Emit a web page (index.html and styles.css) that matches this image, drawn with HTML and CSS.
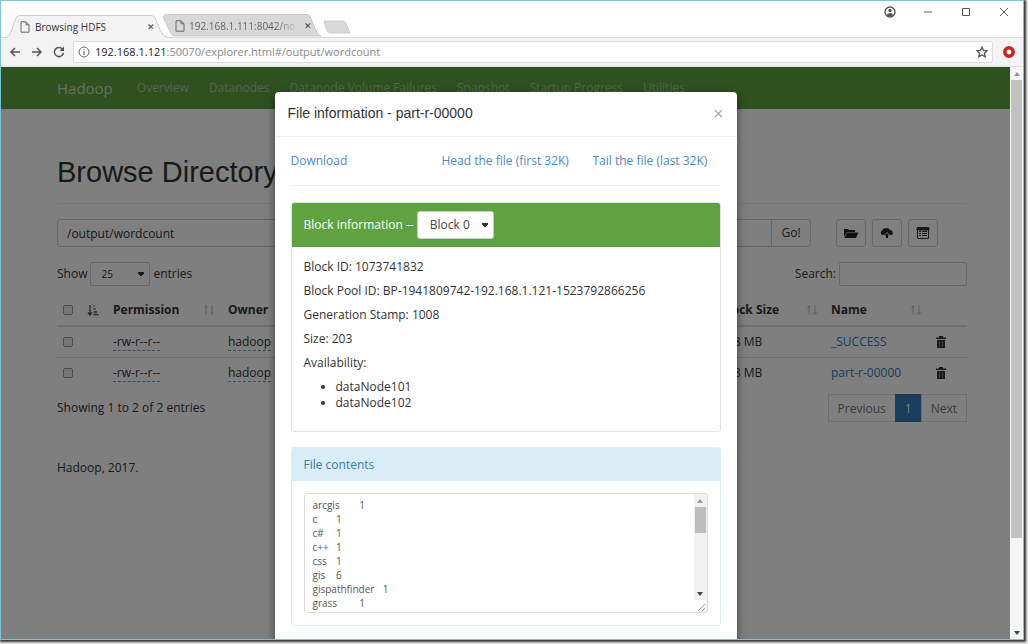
FILE: index.html
```html
<!DOCTYPE html>
<html lang="en">
<head>
<meta charset="utf-8">
<title>Browsing HDFS</title>
<link rel="stylesheet" href="styles.css">
</head>
<body>
<svg class="defs" aria-hidden="true">
  <symbol id="doc" viewBox="0 0 10 12"><path d="M1 .8h5l3 3v7.4H1zM6 .8v3h3" fill="none" stroke="currentColor"/></symbol>
  <symbol id="sort" viewBox="0 0 12 12"><path d="M3 11V2M1.500 3.500L3 1.500l1.500 2M9 1v9M7.500 8.500L9 10.500l1.500-2" fill="none" stroke="currentColor"/></symbol>
  <symbol id="trash" viewBox="0 0 12 14"><path d="M1 2.500h3V1h4v1.500h3V4H1zM2 5h8v8H2z" fill="currentColor"/><path d="M4.500 6v6M7.500 6v6" stroke="#999" stroke-width=".8"/></symbol>
</svg>
<div class="window">
  <header class="tabstrip">
    <div class="tabs">
      <div class="tab active"><svg class="tab-bg" viewBox="0 0 164 23" preserveAspectRatio="none"><path d="M0 23C6 22 6 19 8 14L12 3Q13 .5 16 .5H147Q150 .5 151 3L156 15Q159 22 164 23" fill="#f4f3f4" stroke="#cfc8ce"/></svg>
        <svg class="doc"><use href="#doc"/></svg><span>Browsing HDFS</span><button class="tab-x" aria-label="Close tab">✕</button></div>
      <div class="tab"><svg class="tab-bg" viewBox="0 0 164 23" preserveAspectRatio="none"><path d="M0 3Q1 .5 4 .5H147Q150 .5 151 3L156 15Q159 22 162 22H12Q9 22 7 17Z" fill="#d8d8d8" stroke="#c8c4c8"/></svg>
        <svg class="doc"><use href="#doc"/></svg><span class="fade">192.168.1.111:8042/no</span><button class="tab-x" aria-label="Close tab">✕</button></div>
      <button class="newtab" aria-label="New tab"><svg viewBox="0 0 28 14"><path d="M1 1H20Q22 1 23 3L27 13H8Q5 13 4 11Z" fill="#d9d9d9" stroke="#cecece"/></svg></button>
    </div>
    <div class="controls">
      <button aria-label="Account"><svg viewBox="0 0 12 12"><circle cx="6" cy="6" r="5" fill="none" stroke="#555" stroke-width="1.400"/><circle cx="6" cy="4.500" r="1.700" fill="#555"/><path d="M2.500 9Q6 5 9.500 9Q6 12 2.500 9" fill="#555"/></svg></button>
      <button aria-label="Minimize"><svg viewBox="0 0 12 12"><path d="M2 6h8" stroke="#666"/></svg></button>
      <button aria-label="Maximize"><svg viewBox="0 0 12 12"><path d="M2.500 2.500h7v7h-7z" fill="none" stroke="#555"/></svg></button>
      <button aria-label="Close"><svg viewBox="0 0 12 12"><path d="M2 2l8 8M10 2l-8 8" stroke="#555"/></svg></button>
    </div>
  </header>
  <div class="toolbar">
    <button aria-label="Back"><svg viewBox="0 0 12 12"><path d="M11 6H2M6 2L2 6l4 4" fill="none" stroke="#555" stroke-width="1.500"/></svg></button>
    <button aria-label="Forward"><svg viewBox="0 0 12 12"><path d="M1 6h9M6 2l4 4-4 4" fill="none" stroke="#555" stroke-width="1.500"/></svg></button>
    <button aria-label="Reload"><svg viewBox="0 0 12 12"><path d="M9.500 3A4.600 4.600 0 1 0 10.500 7" fill="none" stroke="#555" stroke-width="1.500"/><path d="M11 .5V5H6.500z" fill="#555"/></svg></button>
    <div class="address">
      <svg class="i12" viewBox="0 0 12 12"><circle cx="6" cy="6" r="5" fill="none" stroke="#666"/><path d="M6 5.200V9M6 3v1.200" stroke="#666" stroke-width="1.200"/></svg>
      <span class="url"><b>192.168.1.121</b>:50070/explorer.html#/output/wordcount</span>
      <svg class="i12" viewBox="0 0 12 12"><path d="M6 1l1.500 3.400 3.600.4-2.700 2.400.8 3.600L6 9 2.800 10.800l.8-3.600L.9 4.800l3.600-.4z" fill="none" stroke="#555" stroke-width="1.300"/></svg>
    </div>
    <button aria-label="Extension"><svg viewBox="0 0 12 12"><circle cx="6" cy="6" r="4.200" fill="#fff" stroke="#c9251c" stroke-width="3.500"/></svg></button>
  </div>
  <div class="viewport">
    <div class="page">
      <nav class="navbar">
        <a class="brand" href="#">Hadoop</a><a href="#">Overview</a><a href="#">Datanodes</a><a href="#">Datanode Volume Failures</a><a href="#">Snapshot</a><a href="#">Startup Progress</a><a href="#">Utilities</a>
      </nav>
      <main class="container">
        <h1>Browse Directory</h1>
        <div class="pathrow">
          <div class="path"><input type="text" value="/output/wordcount" aria-label="Directory"><button class="btn go">Go!</button></div>
          <div class="tools">
            <button class="btn" aria-label="Create directory"><svg viewBox="0 0 16 12"><path d="M1 10V2h4l1 1h6v2H4z" fill="#222"/><path d="M4.200 5.500H15.500l-2.500 5.500H1.500z" fill="#222"/></svg></button>
            <button class="btn" aria-label="Upload"><svg viewBox="0 0 16 12"><path d="M3.500 8A2.500 2.500 0 0 1 3 3.500 4.500 4 0 0 1 11 3a3 3 0 0 1 2 5h-2L8 5 5 8z" fill="#222"/><path d="M8 6l2.500 2.500H9V11H7V8.500H5.500z" fill="#222"/></svg></button>
            <button class="btn" aria-label="Cut and paste"><svg viewBox="0 0 16 12"><path d="M2.500.5h11v11h-11z" fill="none" stroke="#333"/><path d="M2 1h12v2H2zM4 4.500h2M7 4.500h5M4 6.500h2M7 6.500h5M4 8.500h2M7 8.500h5" fill="#333" stroke="#333"/></svg></button>
          </div>
        </div>
        <div class="filter">
          <label>Show <select><option>25</option></select> entries</label>
          <label>Search: <input type="search"></label>
        </div>
        <table>
          <colgroup><col class="c-check"><col class="c-order"><col class="c-perm"><col><col class="c-block"><col class="c-name"><col class="c-del"></colgroup>
          <thead><tr><th><input type="checkbox" aria-label="Select all"></th>
            <th><svg class="order" viewBox="0 0 12 12"><path d="M3 1v10M1 8.500L3 11l2-2.500M6.500 2h1M6.500 5h2M6.500 8h3.500M6.500 10.500h5" fill="none" stroke="#555" stroke-width="1.400"/></svg></th>
            <th><div>Permission<svg><use href="#sort"/></svg></div></th><th>Owner</th>
            <th><div>Block Size<svg><use href="#sort"/></svg></div></th><th><div>Name<svg><use href="#sort"/></svg></div></th><th></th></tr></thead>
          <tbody>
            <tr><td><input type="checkbox" aria-label="Select _SUCCESS"></td><td></td><td><span class="edit">-rw-r--r--</span></td><td><span class="edit">hadoop</span></td><td>128 MB</td><td><a href="#">_SUCCESS</a></td><td><button class="del" aria-label="Delete _SUCCESS"><svg><use href="#trash"/></svg></button></td></tr>
            <tr><td><input type="checkbox" aria-label="Select part-r-00000"></td><td></td><td><span class="edit">-rw-r--r--</span></td><td><span class="edit">hadoop</span></td><td>128 MB</td><td><a href="#">part-r-00000</a></td><td><button class="del" aria-label="Delete part-r-00000"><svg><use href="#trash"/></svg></button></td></tr>
          </tbody>
        </table>
        <div class="below"><span>Showing 1 to 2 of 2 entries</span><div class="pager"><button>Previous</button><button class="on">1</button><button>Next</button></div></div>
        <footer>Hadoop, 2017.</footer>
      </main>
      <div class="backdrop">
        <section class="modal" role="dialog" aria-labelledby="title">
          <div class="modal-head"><h2 id="title">File information - part-r-00000</h2><button aria-label="Close">×</button></div>
          <div class="modal-body">
            <div class="links"><a href="#">Download</a><a href="#">Head the file (first 32K)</a><a href="#">Tail the file (last 32K)</a></div>
            <div class="panel">
              <div class="panel-head green"><label for="block">Block information --</label><select id="block"><option>Block 0</option></select></div>
              <div class="panel-body info">
                <p>Block ID: 1073741832</p><p>Block Pool ID: BP-1941809742-192.168.1.121-1523792866256</p><p>Generation Stamp: 1008</p><p>Size: 203</p><p>Availability:</p>
                <ul><li>dataNode101</li><li>dataNode102</li></ul>
              </div>
            </div>
            <div class="panel blue">
              <div class="panel-head"><label for="contents">File contents</label></div>
              <div class="panel-body"><div class="filebox">
<textarea id="contents" readonly>arcgis	1
c	1
c#	1
c++	1
css	1
gis	6
gispathfinder	1
grass	1</textarea>
                <div class="scroll"><i class="up"></i><i class="thumb"></i><i class="down"></i><svg viewBox="0 0 12 12"><path d="M0 0h12v4Q10 10 3 12H0z" fill="#fff"/><path d="M4 11l7-7M8 11l3-3" stroke="#aaa"/></svg></div>
              </div></div>
            </div>
          </div>
        </section>
      </div>
    </div>
    <div class="scroll main"><i class="up"></i><i class="thumb"></i><i class="down"></i></div>
  </div>
</div>
</body>
</html>
```
FILE: styles.css
```css
* { box-sizing: border-box; }
body {
  margin: 0;
  height: 100vh;
  padding: 0 4px 4px 0;
  background: #eee;
  overflow: hidden;
  font: 12px/16px "Open Sans", "Noto Sans", sans-serif;
  color: #333;
}
button, input, select, textarea { font: inherit; color: inherit; margin: 0; }
button { padding: 0; border: 0; background: none; }
a { color: #337ab7; text-decoration: none; }
.defs { position: absolute; width: 0; height: 0; }
.window {
  height: 100%;
  display: flex;
  flex-direction: column;
  background: #fff;
  border: 1px solid #7cc3d6;
  box-shadow: 1px 1px 2px 1px #333;
}

/* browser chrome */
.tabstrip { height: 37px; flex: none; display: flex; justify-content: space-between; border-bottom: 1px solid #ddd; }
.tabs { display: flex; align-items: flex-end; padding-left: 3px; }
.tab { position: relative; isolation: isolate; width: 164px; height: 23px; padding: 0 12px 0 16px; display: flex; align-items: center; gap: 5px; font-size: 10px; color: #333; }
.tab + .tab { width: 160px; margin-left: -5px; padding: 0 10px 0 12px; gap: 4px; color: #666; }
.tab.active { margin-bottom: -1px; z-index: 1; }
.tab-bg { position: absolute; inset: 0; width: 100%; height: 100%; z-index: -1; }
.tab span { flex: 1; white-space: nowrap; }
.fade { -webkit-mask-image: linear-gradient(90deg, #000 80%, transparent); mask-image: linear-gradient(90deg, #000 80%, transparent); }
.doc { width: 10px; height: 12px; color: #666; }
.tab-x { width: 10px; font-size: 9px; color: #444; }
.newtab { width: 28px; height: 14px; margin-bottom: 3px; }
.newtab svg { display: block; }
.controls { display: flex; gap: 26px; padding: 5px 13px 0 0; align-items: flex-start; }
.controls svg, .toolbar button svg, .i12 { display: block; width: 12px; height: 12px; flex: none; }
.toolbar { height: 29px; flex: none; display: flex; align-items: center; gap: 10px; padding: 0 8px; background: #f3f3f4; border-bottom: 1px solid #d5dfea; }
.toolbar .address { flex: 1; display: flex; align-items: center; gap: 5px; height: 22px; margin-left: -2px; padding: 0 4px; background: #fff; border: 1px solid #ddd; border-radius: 2px; }
.url { flex: 1; font-size: 11px; color: #888; }
.url b { font-weight: 400; color: #222; }

.viewport { flex: 1; min-height: 0; display: flex; }
.page { position: relative; flex: 1; min-width: 0; overflow: hidden; }
.scroll { width: 13px; flex: none; display: flex; flex-direction: column; background: #f1f1f1; }
.scroll .up, .scroll .down { height: 13px; flex: none; display: grid; place-items: center; }
.scroll .up::after, .scroll .down::after { content: ""; border: 3px solid transparent; border-top: 0; border-bottom: 4px solid #999; }
.scroll .down { margin-top: auto; }
.scroll .down::after { border-top: 4px solid #444; border-bottom: 0; }
.scroll .thumb { height: 26px; background: #bcbcbc; margin: 0 1px; }
.scroll.main { background: #f6f6f6; }
.scroll.main .thumb { height: 80%; background: #c1c1c1; }

/* directory listing */
.navbar { height: 42px; padding: 0 56px; display: flex; align-items: center; gap: 20px; background: #5fa341; white-space: nowrap; }
.navbar a { color: #a9c89a; }
.navbar .brand { margin-right: 4px; font-size: 15px; color: #cfdfc8; }
.container { padding: 0 43px 0 56px; }
h1 { margin: 0; padding: 45px 0 13px; font: 29px/36px "Liberation Sans", Arial, sans-serif; border-bottom: 1px solid #eee; }
.pathrow { display: flex; justify-content: space-between; margin-top: 15px; padding-right: 29px; gap: 25px; }
.path { display: flex; flex: 1; }
.path input { flex: 1; min-width: 0; height: 28px; padding: 0 9px; border: 1px solid #ccc; border-radius: 3px 0 0 3px; background: #fff; }
.btn { height: 28px; width: 30px; border: 1px solid #ccc; border-radius: 3px; background: #fff; display: grid; place-items: center; }
.btn svg { width: 16px; height: 12px; }
.go { width: 40px; margin-left: -1px; border-radius: 0 3px 3px 0; }
.tools { display: flex; gap: 6px; }
.filter { display: flex; justify-content: space-between; margin-top: 15px; }
.filter label { display: flex; align-items: center; gap: 3px; }
.filter select, .filter input { height: 24px; border: 1px solid #ccc; background-color: #fff; border-radius: 2px; }
.filter select { width: 60px; padding: 0 10px; font-size: 10px; }
.filter input { width: 128px; }
select {
  appearance: none;
  background: #fff conic-gradient(from -30deg at 50% 100%, #333 60deg, transparent 0) no-repeat right 5px center / 5px 5px;
  background-image: linear-gradient(#333, #333), linear-gradient(#333, #333), linear-gradient(#333, #333);
  background-position: right 5px top 45%, right 6px top 50%, right 7px top 55%;
  background-size: 6px 2px, 4px 2px, 2px 2px;
}
table { width: 100%; margin-top: 9px; border-collapse: collapse; table-layout: fixed; }
.c-check { width: 22px; }
.c-order { width: 26px; }
.c-perm { width: 115px; }
.c-block { width: 111px; }
.c-name { width: 104px; }
.c-del { width: 40px; }
th, td { height: 31px; padding: 0 0 0 8px; text-align: left; white-space: nowrap; vertical-align: middle; }
th:first-child, td:first-child { padding-left: 6px; }
th { border-bottom: 2px solid #ddd; }
td { border-bottom: 1px solid #ddd; }
tr:last-child td { border-bottom: 0; }
th div { display: flex; justify-content: space-between; align-items: center; padding-right: 5px; }
th svg { width: 12px; height: 12px; color: #bbb; display: block; }
table input { appearance: none; display: block; width: 10px; height: 10px; border: 1px solid #999; border-radius: 2px; background: #eee; }
.edit { border-bottom: 1px dashed #5aa0c8; }
.del { display: block; }
.del svg { width: 12px; height: 14px; display: block; color: #333; }
.below { display: flex; justify-content: space-between; margin-top: 6px; line-height: 28px; }
.pager { display: flex; color: #777; }
.pager button { padding: 0 9px; height: 28px; border: 1px solid #ddd; margin-left: -1px; }
.pager .on { background: #337ab7; border-color: #337ab7; color: #fff; }
footer { margin-top: 38px; }

/* file dialog */
.backdrop { position: absolute; inset: 0; background: rgba(0, 0, 0, .5); overflow: hidden; padding-top: 25px; }
.modal { width: 462px; max-width: 96%; margin: 0 auto; min-height: 640px; background: #fff; border-radius: 4px; box-shadow: 0 3px 10px rgba(0, 0, 0, .5); }
.modal-head { height: 45px; padding: 0 13px 2px; display: flex; align-items: center; justify-content: space-between; border-bottom: 1px solid #eee; }
.modal-head h2 { margin: 0; font: 14px/20px "Liberation Sans", Arial, sans-serif; }
.modal-head button { font-size: 18px; color: #aaa; line-height: 20px; }
.modal-body { padding: 16px; }
.links { display: grid; grid-template-columns: 151px 151px auto; padding-bottom: 16px; border-bottom: 1px solid #f0f0f0; white-space: nowrap; }
.links a { color: #4a8ac6; }
.panel { margin-top: 16px; border: 1px solid #e4e4e4; border-radius: 3px; overflow: hidden; }
.panel-head { height: 33px; padding: 0 12px; display: flex; align-items: center; background: #d9edf7; color: #3a7ca5; }
.panel-head.green { height: 44px; background: #5fa341; color: #fff; gap: 3px; }
.panel-head select { height: 28px; width: 77px; border: 1px solid #ccc; border-radius: 3px; color: #444; padding: 0 12px; background-color: #fff; }
.panel-body { padding: 12px; }
.info { padding-bottom: 20px; }
.info p { margin: 0 0 8px; }
.info ul { margin: 0; padding-left: 32px; }
.panel.blue { margin-top: 15px; border-color: #d9f1f4; }
.filebox { height: 120px; display: flex; border: 1px solid #ddd; border-radius: 3px; overflow: hidden; }
.filebox textarea { flex: 1; min-width: 0; border: 0; outline: 0; resize: none; overflow: hidden; padding: 4px 8px 0; font-size: 10px; line-height: 14px; tab-size: 9; color: #555; }
.filebox .scroll svg { width: 12px; height: 12px; display: block; }
```
